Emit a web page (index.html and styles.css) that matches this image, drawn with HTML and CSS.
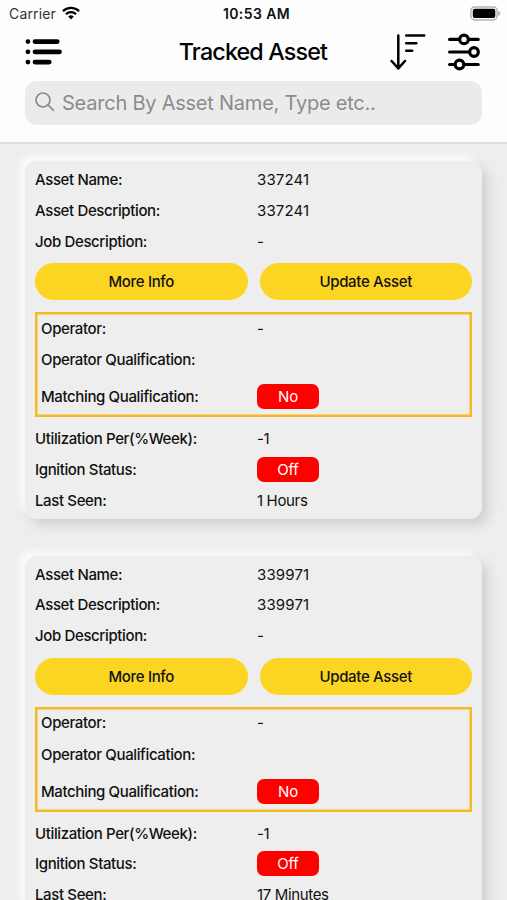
FILE: index.html
```html
<!DOCTYPE html>
<html lang="en">
<head>
<meta charset="utf-8">
<title>Tracked Asset</title>
<link rel="stylesheet" href="styles.css">
</head>
<body>
<header class="header">
  <div class="status">
    <div class="carrier"><span>Carrier</span>
      <svg width="18" height="14" viewBox="0 0 18 14" fill="none" stroke="#000" stroke-width="2.3"><path d="M.9 5.1a11.6 11.6 0 0 1 16.2 0M3.9 8.2a7.3 7.3 0 0 1 10.2 0"/><path d="M6.2 10.6a4 4 0 0 1 5.6 0L9 13.4z" fill="#000" stroke="none"/></svg>
    </div>
    <div class="clock">10:53 AM</div>
    <svg class="battery" width="31" height="15" viewBox="0 0 31 15"><rect x=".9" y=".9" width="26.2" height="13" rx="3.8" fill="#fdfdfd" stroke="#b5b5b5" stroke-width="1.5"/><rect x="2.8" y="2.8" width="22.5" height="9.2" rx="2" fill="#000"/><path d="M28.3 5v5q2-.6 2-2.5t-2-2.5z" fill="#aaa"/></svg>
  </div>
  <div class="nav">
    <svg class="menu" width="38" height="28" viewBox="0 0 38 28" fill="none" stroke="#000" stroke-width="4.8" stroke-linecap="round"><path d="M2.9 3.6h.01M10 3.6h22.2M2.9 13.8h.01M10 13.8h24.5M2.9 24.1h.01M10 24.1h14.2"/></svg>
    <h1>Tracked Asset</h1>
    <div class="tools">
      <svg width="38" height="38" viewBox="0 0 38 38" fill="none" stroke="#000" stroke-width="2.5" stroke-linecap="round" stroke-linejoin="round"><path d="M8.3 2.5v33M1.6 28l6.7 7.3 6.7-7.3M16.2 2.6h18M16.2 10.2h10.2M16.2 17.8h6"/></svg>
      <svg width="34" height="38" viewBox="0 0 34 38" fill="none" stroke="#000" stroke-width="3.2" stroke-linecap="round"><path d="M2.6 6.4h9.2M22 6.4h9.2M2.6 19h19.5M2.6 31.5h4.8M18 31.5h13.2"/><circle cx="17" cy="6.4" r="4.3"/><circle cx="27" cy="19" r="4.3"/><circle cx="12.5" cy="31.5" r="4.3"/></svg>
    </div>
  </div>
  <div class="search">
    <svg width="20" height="20" viewBox="0 0 20 20" fill="none" stroke="#8b8b8d" stroke-width="1.7" stroke-linecap="round"><circle cx="8" cy="8" r="7"/><path d="M13.2 13.2l5.4 5.3"/></svg>
    <span>Search By Asset Name, Type etc..</span>
  </div>
</header>
<main class="list">
  <article class="card">
    <div class="row"><span class="label">Asset Name:</span><span>337241</span></div>
    <div class="row"><span class="label">Asset Description:</span><span>337241</span></div>
    <div class="row"><span class="label">Job Description:</span><span>-</span></div>
    <div class="buttons"><div class="button">More Info</div><div class="button">Update Asset</div></div>
    <section class="operator">
      <div class="row"><span class="label">Operator:</span><span>-</span></div>
      <div class="row"><span class="label">Operator Qualification:</span></div>
      <div class="row tall"><span class="label">Matching Qualification:</span><span class="badge">No</span></div>
    </section>
    <div class="row"><span class="label">Utilization Per(%Week):</span><span class="tight">-1</span></div>
    <div class="row"><span class="label">Ignition Status:</span><span class="badge">Off</span></div>
    <div class="row"><span class="label">Last Seen:</span><span class="tight">1 Hours</span></div>
  </article>
  <article class="card">
    <div class="row"><span class="label">Asset Name:</span><span>339971</span></div>
    <div class="row"><span class="label">Asset Description:</span><span>339971</span></div>
    <div class="row"><span class="label">Job Description:</span><span>-</span></div>
    <div class="buttons"><div class="button">More Info</div><div class="button">Update Asset</div></div>
    <section class="operator">
      <div class="row"><span class="label">Operator:</span><span>-</span></div>
      <div class="row"><span class="label">Operator Qualification:</span></div>
      <div class="row tall"><span class="label">Matching Qualification:</span><span class="badge">No</span></div>
    </section>
    <div class="row"><span class="label">Utilization Per(%Week):</span><span class="tight">-1</span></div>
    <div class="row"><span class="label">Ignition Status:</span><span class="badge">Off</span></div>
    <div class="row"><span class="label">Last Seen:</span><span class="tight">17 Minutes</span></div>
  </article>
</main>
</body>
</html>
```
FILE: styles.css
```css
* { box-sizing: border-box; }
html { height: 100%; overflow: hidden; }
body { margin: 0; height: 900px; overflow: hidden; background: #eee; color: #111; font-family: Inter, "Liberation Sans", sans-serif; font-size: 15px; }
svg { display: block; flex: none; }
.header { height: 144px; background: #fdfdfd; border-bottom: 2px solid #dfdfdf; }
.status { height: 28px; padding: 0 6px 0 9px; display: grid; grid-template-columns: 1fr auto 1fr; align-items: center; font-size: 14px; }
.carrier { display: flex; align-items: center; gap: 6px; color: #333; letter-spacing: .15px; margin-top: -1px; }
.carrier svg { margin-top: -2px; }
.clock { font-weight: 600; font-size: 14px; letter-spacing: .4px; margin-right: -3px; margin-top: -1px; }
.battery { justify-self: end; margin-top: -1px; }
.nav { height: 48px; padding: 0 26px 0 25px; display: grid; grid-template-columns: 1fr auto 1fr; align-items: center; }
.menu { margin-top: -1px; }
h1 { margin: -2px 0 0; font-size: 23.3px; font-weight: 500; letter-spacing: -.85px; color: #000; }
.tools { display: flex; justify-content: flex-end; gap: 19px; }
.search { width: 457px; height: 44px; margin: 5px 25px 0; padding-left: 10px; border-radius: 12px; background: #ebebeb; display: flex; align-items: center; gap: 7px; color: #8b8b8f; font-size: 20px; letter-spacing: -.23px; }
.search svg { margin-top: -2px; }
.list { padding: 17px 25px 0; }
.card { width: 457px; height: 358px; margin-bottom: 36.5px; padding: 3.4px 10px; border-radius: 12px; background: #eee; box-shadow: -6px -6px 6px rgba(255,255,255,.65), 6px 6px 12px rgba(174,170,165,.45); }
.row { height: 30.7px; display: grid; grid-template-columns: 222px 1fr; align-items: center; justify-items: start; letter-spacing: .15px; }
.label { font-weight: 500; letter-spacing: -.37px; }
.buttons { display: grid; grid-template-columns: 1fr 1fr; gap: 12px; margin: 6.6px 0 12px; }
.button { height: 37px; border-radius: 19px; background: #fcd522; display: grid; place-items: center; font-weight: 500; letter-spacing: -.33px; }
.operator { height: 105px; border: 2px solid #f5b921; box-shadow: inset 0 0 0 .5px #f5b921; padding-left: 4px; margin-bottom: 6.4px; }
.operator .row { grid-template-columns: 216px 1fr; height: 31.5px; margin-top: -1.5px; }
.operator .row + .row { margin-top: 0; }
.operator .tall { height: 42px; }
.badge { width: 62px; height: 25px; border-radius: 7px; background: #fe0000; color: #fff; display: grid; place-items: center; letter-spacing: -.2px; }
.tight { letter-spacing: -.35px; }
```
